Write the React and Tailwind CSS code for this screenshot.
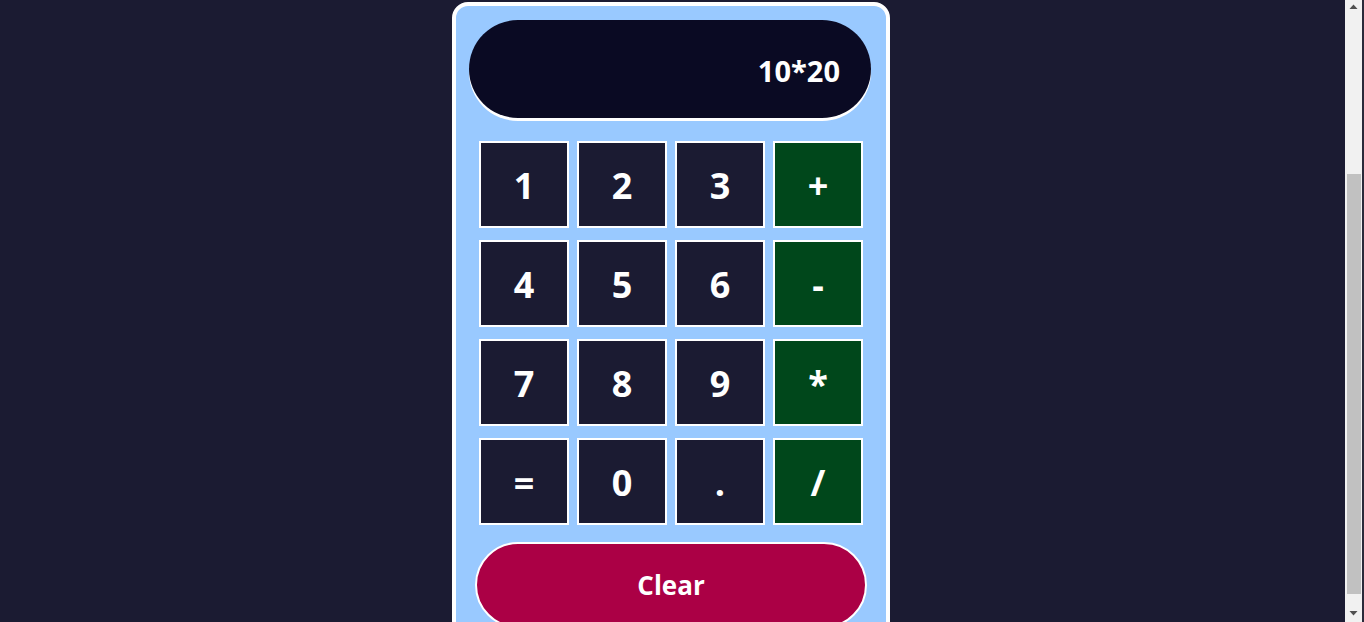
import React, { useLayoutEffect, useEffect } from "react";

const keys = [
  ["1", "2", "3", "+"],
  ["4", "5", "6", "-"],
  ["7", "8", "9", "*"],
  ["=", "0", ".", "/"],
];

function FakeScrollbar() {
  return (
    <div className="fixed top-0 right-0 h-[622px] w-[19px] flex">
      <div className="relative w-[17px] h-full bg-[#f1f1f1]">
        <svg className="absolute left-[4px] top-[4px]" width="9" height="6" viewBox="0 0 9 6">
          <path d="M4.5 0.5 L8.5 5 L0.5 5 Z" fill="#505050" />
        </svg>
        <div className="absolute left-[2px] top-[174px] w-[14px] h-[420px] bg-[#c1c1c1]" />
        <svg className="absolute left-[4px] top-[610px]" width="9" height="6" viewBox="0 0 9 6">
          <path d="M0.5 1 L8.5 1 L4.5 5.5 Z" fill="#505050" />
        </svg>
      </div>
      <div className="w-[2px] h-full bg-[#2a2a3a]" />
    </div>
  );
}

export default function App() {
  const scroll = () => {
    window.scrollTo(0, document.documentElement.scrollHeight);
  };
  useLayoutEffect(scroll, []);
  useEffect(() => {
    scroll();
    const t = setTimeout(scroll, 0);
    return () => clearTimeout(t);
  }, []);

  return (
    <div
      className="bg-[#1b1b32] h-[880px] overflow-hidden"
      style={{ fontFamily: '"Open Sans", "Noto Sans", sans-serif' }}
    >
      <div className="w-[1345px] pt-[260px] flex justify-center">
        <div className="w-[438px] h-[700px] border-4 border-white rounded-2xl bg-[#99c9ff] ml-[-3px] shrink-0">
          <div className="pt-[14px] pl-[13px]">
            <div className="h-[98px] w-[402px] rounded-full bg-[#0a0a23] shadow-[0_3px_0_white] flex items-center justify-end pr-[31px] pt-[2px]">
              <span className="text-white font-bold text-[29px] leading-none">10*20</span>
            </div>
          </div>
          <div className="mt-[23px] flex flex-col items-center gap-[12px]">
            {keys.map((row, i) => (
              <div key={i} className="flex gap-[8px]">
                {row.map((k, j) => (
                  <div
                    key={k}
                    className={`w-[90px] h-[87px] border-2 border-white flex items-center justify-center text-white font-bold text-[36px] leading-none pt-[2px] ${
                      j === 3 ? "bg-[#00471b]" : "bg-[#1b1b32]"
                    }`}
                  >
                    {k}
                  </div>
                ))}
              </div>
            ))}
          </div>
          <div className="mt-[17px] flex justify-center">
            <div className="w-[392px] h-[86px] rounded-full border-2 border-white bg-[#ab0045] flex items-center justify-center text-white font-bold text-[26px] leading-none">
              Clear
            </div>
          </div>
        </div>
      </div>
      <FakeScrollbar />
    </div>
  );
}
